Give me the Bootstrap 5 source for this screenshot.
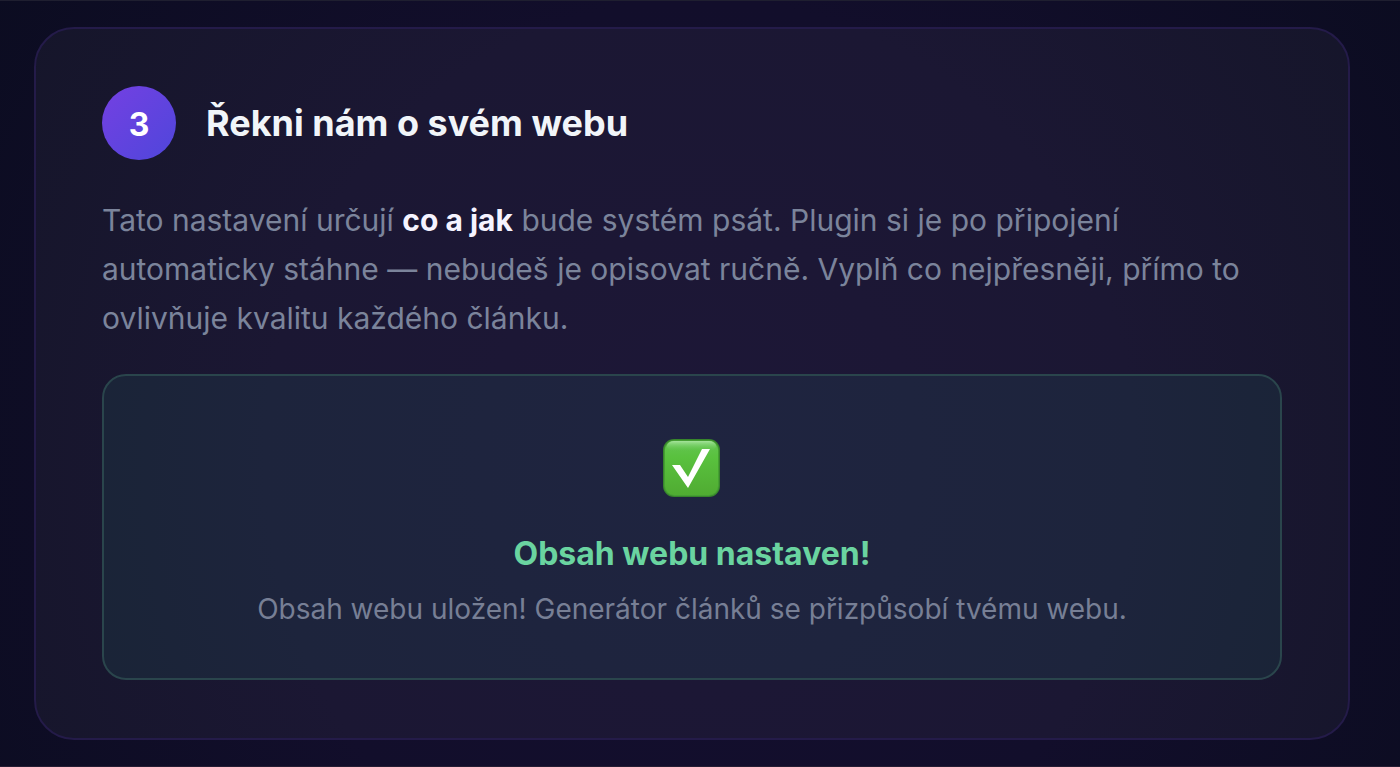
<!DOCTYPE html>
<html lang="cs" data-bs-theme="dark">
<head>
<meta charset="utf-8">
<meta name="viewport" content="width=device-width, initial-scale=1">
<title>Řekni nám o svém webu</title>
<link href="https://cdn.jsdelivr.net/npm/bootstrap@5.3.0/dist/css/bootstrap.min.css" rel="stylesheet">
<style>
body{font-family:Inter,"Liberation Sans",sans-serif;background:radial-gradient(ellipse 62% 120% at 50% 60%,#140e2f 0%,#120e2b 50%,#0b0c20 100%) #0b0c20;min-height:100vh}
.page-step{border-top:1px solid #1f1f30;border-bottom:1px solid #251d33;padding:26px 50px 26px 34px}
.step-panel{background:rgba(255,255,255,.04);border:2px solid #241b49;border-radius:40px;padding:57px 66px 58px}
.step-head{gap:30px;margin-bottom:36px}
.step-number{width:74px;height:74px;background:linear-gradient(135deg,#7440e2,#4f46db);font-size:32px;padding-top:4px}
.step-title{font-size:36px;line-height:44px;color:#f1f5f9}
.step-text{font-size:30px;line-height:49px;color:#7b849b;margin-bottom:31px}
.step-text strong{color:#f5f3ff}
.done-box{background:rgba(60,180,150,.09);border:2px solid #2a454c;border-radius:24px;padding:63px 48px 48px}
.done-icon{width:58px;height:58px;margin-bottom:33px}
.done-title{font-size:32px;line-height:48px;color:#6ad4a0;margin-bottom:10px}
.done-text{font-size:28px;line-height:42px;color:#777f95}
</style>
</head>
<body>
<main class="page-step">
<section class="step-panel">
<header class="step-head d-flex align-items-center">
<span class="step-number rounded-circle d-flex flex-shrink-0 align-items-center justify-content-center fw-bold text-white">3</span>
<h1 class="step-title fw-bold mb-0">Řekni nám o svém webu</h1>
</header>
<p class="step-text">Tato nastavení určují <strong>co a jak</strong> bude systém psát. Plugin si je po připojení automaticky stáhne — nebudeš je opisovat ručně. Vyplň co nejpřesněji, přímo to ovlivňuje kvalitu každého článku.</p>
<div class="done-box text-center">
<svg class="done-icon d-block mx-auto" viewBox="0 0 58 58" role="img" aria-label="Hotovo">
<defs>
<linearGradient id="tile" x1="0" y1="0" x2="0" y2="1"><stop offset="0" stop-color="#64c553"/><stop offset=".3" stop-color="#59c13e"/><stop offset="1" stop-color="#50ac32"/></linearGradient>
<linearGradient id="gloss" x1="0" y1="0" x2="0" y2="1"><stop offset="0" stop-color="#a5e39b"/><stop offset="1" stop-color="#65c952" stop-opacity="0"/></linearGradient>
</defs>
<rect x="0" y="0" width="57" height="58" rx="11" fill="#37852b"/>
<rect x="1" y="1" width="55" height="56" rx="10" fill="#469f33"/>
<rect x="2" y="2" width="53" height="54" rx="9" fill="url(#tile)"/>
<rect x="4" y="2" width="49" height="10" rx="7" fill="url(#gloss)"/>
<path d="M9 26h8l8 12L39 10h8L25 49z" fill="#fff"/>
</svg>
<h2 class="done-title fw-bold">Obsah webu nastaven!</h2>
<p class="done-text mb-0">Obsah webu uložen! Generátor článků se přizpůsobí tvému webu.</p>
</div>
</section>
</main>
<script src="https://cdn.jsdelivr.net/npm/bootstrap@5.3.0/dist/js/bootstrap.bundle.min.js"></script>
</body>
</html>
